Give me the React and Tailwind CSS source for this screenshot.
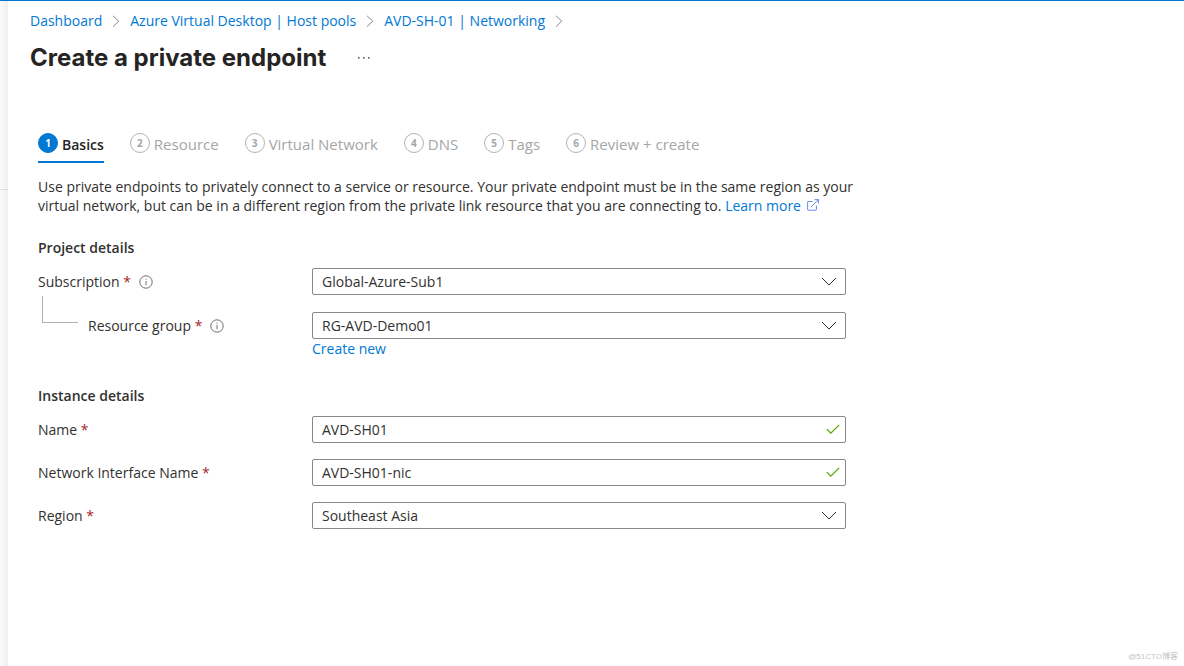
import { useState } from "react";

const crumbs = ["Dashboard", "Azure Virtual Desktop | Host pools", "AVD-SH-01 | Networking"];

const steps = ["Basics", "Resource", "Virtual Network", "DNS", "Tags", "Review + create"];

function CrumbArrow() {
  return (
    <svg className="mx-2.5 h-3 w-2 shrink-0" viewBox="0 0 8 12" fill="none" stroke="#8a8886">
      <path d="M1 0.8L6.8 6.2L1 11.6" />
    </svg>
  );
}

function InfoIcon() {
  return (
    <svg className="h-3.5 w-3.5 shrink-0" viewBox="0 0 14 14" fill="none" stroke="#605e5c">
      <circle cx="7" cy="7" r="6.2" strokeWidth="0.9" />
      <path d="M7 6V10.2M7 3.8V4.8" strokeWidth="0.9" />
    </svg>
  );
}

function ExternalIcon() {
  return (
    <svg className="ml-1.5 inline-block h-3 w-3 align-baseline" viewBox="0 0 12 12" fill="none" stroke="#4f7fe8" strokeWidth="0.9">
      <path d="M5.5 2.5H1.2Q0.6 2.5 0.6 3.1V10.6Q0.6 11.2 1.2 11.2H8.8Q9.4 11.2 9.4 10.6V6.5" />
      <path d="M4 8L11.3 0.7M7.6 0.6H11.4V4.4" />
    </svg>
  );
}

function Label({ htmlFor, children, info }) {
  return (
    <div className="flex items-center gap-2">
      <label htmlFor={htmlFor}>
        {children} <span className="text-[#a4262c]">*</span>
      </label>
      {info && <InfoIcon />}
    </div>
  );
}

function SelectBox({ id, options }) {
  return (
    <div className="relative">
      <select
        id={id}
        className="block h-[27px] w-full appearance-none rounded-xs border border-[#8a8886] bg-white px-[9px] text-sm leading-5 outline-none"
      >
        {options.map((o) => (
          <option key={o}>{o}</option>
        ))}
      </select>
      <svg className="pointer-events-none absolute top-2 right-[9px] h-3 w-4" viewBox="0 0 16 12" fill="none" stroke="#323130">
        <path d="M1 2L8 9L15 2" />
      </svg>
    </div>
  );
}

function TextBox({ id, defaultValue }) {
  return (
    <div className="relative">
      <input
        id={id}
        type="text"
        defaultValue={defaultValue}
        className="block h-[27px] w-full rounded-xs border border-[#8a8886] bg-white pr-7 pl-[9px] text-sm leading-5 outline-none"
      />
      <svg className="pointer-events-none absolute top-2 right-1.5 h-3 w-3.5" viewBox="0 0 14 12" fill="none" stroke="#57a300" strokeWidth="1.2">
        <path d="M0.8 5.2L4.8 9.2L13.2 0.8" />
      </svg>
    </div>
  );
}

export default function App() {
  const [active, setActive] = useState(0);

  return (
    <div className="flex min-h-screen border-t border-[#0078d4] bg-white font-['Open_Sans','Noto_Sans_CJK_SC',sans-serif] text-sm text-[#323130]">
      {/* collapsed side menu edge */}
      <div className="w-2 shrink-0 bg-linear-to-r from-[#fafafa] to-[#efefef]">
        <div className="h-[189px] border-b border-[#dddddd]" />
      </div>

      <div className="flex flex-1 flex-col">
        <header className="px-[22px] pt-2.5">
          <nav className="flex items-center leading-5 text-[#0078d4]">
            {crumbs.map((c) => (
              <span key={c} className="flex items-center">
                <a href="#">{c}</a>
                <CrumbArrow />
              </span>
            ))}
          </nav>
          <div className="mt-[11px] flex items-center gap-[30px]">
            <h1 className="font-[Inter,sans-serif] text-2xl leading-8 font-bold text-[#252423]">Create a private endpoint</h1>
            <button type="button" aria-label="More">
              <svg className="h-1 w-4" viewBox="0 0 16 4" fill="#605e5c">
                <rect x="2" y="1" width="1.6" height="1.6" />
                <rect x="7" y="1" width="1.6" height="1.6" />
                <rect x="12" y="1" width="1.6" height="1.6" />
              </svg>
            </button>
          </div>
        </header>

        <main className="flex-1 px-[30px] pt-[59px]">
          <div className="flex gap-[26px]">
            {steps.map((s, i) => (
              <button
                key={s}
                type="button"
                onClick={() => setActive(i)}
                className={`flex h-[30px] items-start gap-1 border-b-2 ${
                  i === active ? "border-[#0078d4] text-sm font-semibold text-[#252423]" : "border-transparent text-[15px] text-[#a6a6a6]"
                }`}
              >
                <span
                  className={`flex h-5 w-5 items-center justify-center rounded-full border text-[10px] font-bold ${
                    i === active ? "border-[#0078d4] bg-[#0078d4] text-white" : "border-[#b3b3b3]"
                  }`}
                >
                  {i + 1}
                </span>
                <span className="leading-[23px]">{s}</span>
              </button>
            ))}
          </div>

          <p className="mt-3.5 max-w-[830px] leading-[19px]">
            Use private endpoints to privately connect to a service or resource. Your private endpoint must be in the same region as your
            virtual network, but can be in a different region from the private link resource that you are connecting to.{" "}
            <a href="#" className="inline-block text-[#0078d4]">
              Learn more
              <ExternalIcon />
            </a>
          </p>

          <section className="mt-[23px] max-w-[808px]">
            <h2 className="leading-5 font-semibold">Project details</h2>
            <div className="mt-2.5 grid grid-cols-[274px_1fr] gap-y-[17px]">
              <Label htmlFor="subscription" info>Subscription</Label>
              <SelectBox id="subscription" options={["Global-Azure-Sub1"]} />
              <div className="flex gap-2.5">
                <div className="-mt-4 ml-1 h-[27px] w-9 border-b border-l border-[#b3b0ad]" />
                <Label htmlFor="group" info>Resource group</Label>
              </div>
              <SelectBox id="group" options={["RG-AVD-Demo01"]} />
            </div>
            <a href="#" className="ml-[274px] inline-block leading-5 text-[#0078d4]">Create new</a>
          </section>

          <section className="mt-[27px] max-w-[808px]">
            <h2 className="leading-5 font-semibold">Instance details</h2>
            <div className="mt-2.5 grid grid-cols-[274px_1fr] gap-y-4">
              <Label htmlFor="name">Name</Label>
              <TextBox id="name" defaultValue="AVD-SH01" />
              <Label htmlFor="nic">Network Interface Name</Label>
              <TextBox id="nic" defaultValue="AVD-SH01-nic" />
              <Label htmlFor="region">Region</Label>
              <SelectBox id="region" options={["Southeast Asia"]} />
            </div>
          </section>
        </main>

        <footer className="px-1.5 pb-[3px] text-right font-['Liberation_Sans','Noto_Sans_CJK_SC',sans-serif] text-[8px] leading-3 text-[#c4c4c4]">
          @51CTO博客
        </footer>
      </div>
    </div>
  );
}
